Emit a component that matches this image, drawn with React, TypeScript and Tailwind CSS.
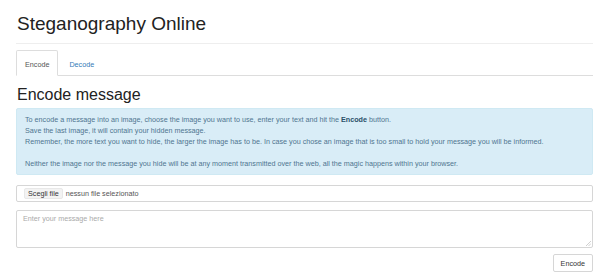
import React from "react";

export default function App() {
  return (
    <div className="w-[610px] h-[279px] bg-white pl-[16px] pr-[17px] text-[#333] overflow-hidden" style={{ fontFamily: '"Liberation Sans", Arial, sans-serif' }}>
      <div className="pt-[13px] pb-[8px] border-b border-[#eee]">
        <h1 className="text-[19px] leading-[22px] font-normal pl-[1px] text-[#222]">Steganography Online</h1>
      </div>
      <ul className="mt-[6px] flex border-b border-[#ddd] text-[7.2px] leading-[11px]">
        <li className="-mb-px">
          <div className="border border-[#ddd] border-b-transparent bg-white rounded-t-[2px] pt-[8px] pb-[5px] px-[8px] text-[#555]">Encode</div>
        </li>
        <li className="-mb-px ml-[2px]">
          <div className="border border-transparent pt-[8px] pb-[5px] px-[8px] text-[#337ab7]">Decode</div>
        </li>
      </ul>
      <h2 className="mt-[9px] text-[16px] leading-[20px] font-normal pl-[1px] text-[#222]">Encode message</h2>
      <div className="mt-[3px] bg-[#d9edf7] border border-[#cfe9f3] rounded-[2px] pt-[5px] pb-[5px] px-[8px] text-[#4f7590] text-[7.2px] leading-[11px]">
        To encode a message into an image, choose the image you want to use, enter your text and hit the <b className="text-[#2a4f68]">Encode</b> button.
        <br />
        Save the last image, it will contain your hidden message.
        <br />
        Remember, the more text you want to hide, the larger the image has to be. In case you chose an image that is too small to hold your message you will be informed.
        <br />
        <br />
        Neither the image nor the message you hide will be at any moment transmitted over the web, all the magic happens within your browser.
      </div>
      <div className="mt-[10px] h-[17px] border border-[#d6d6d6] rounded-[2px] flex items-center pl-[7px] text-[7.2px] leading-[9px]">
        <span className="bg-[#f3f3f3] border border-[#e8e8e8] rounded-[2px] px-[3px] text-[#333]">Scegli file</span>
        <span className="ml-[3px] text-[#555]">nessun file selezionato</span>
      </div>
      <div className="relative mt-[8px]">
        <textarea
          className="block w-full h-[38px] resize-none border border-[#d6d6d6] rounded-[2px] px-[6px] pt-[2px] text-[7.2px] leading-[11px] placeholder:text-[#aaa] outline-none"
          placeholder="Enter your message here"
        />
        <svg className="absolute right-[2px] bottom-[2px]" width="5" height="5" viewBox="0 0 5 5">
          <path d="M5 0 L0 5 M5 2.5 L2.5 5" stroke="#bbb" strokeWidth="0.7" />
        </svg>
      </div>
      <div className="mt-[6px] flex justify-end">
        <button className="h-[18px] border border-[#d6d6d6] rounded-[2px] px-[7px] text-[7.2px] leading-[11px] text-[#333] bg-white">Encode</button>
      </div>
    </div>
  );
}
